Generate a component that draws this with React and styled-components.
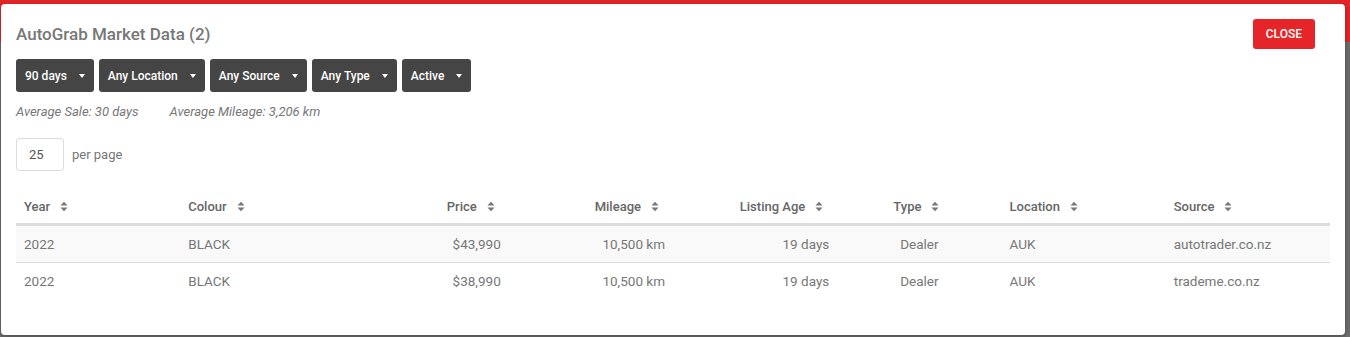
import React from 'react';
import styled, { createGlobalStyle } from 'styled-components';

const GlobalStyle = createGlobalStyle`
  html, body {
    margin: 0;
    padding: 0;
    font-family: Roboto, 'Liberation Sans', Arial, sans-serif;
  }
`;

const Backdrop = styled.div`
  width: 1350px;
  height: 337px;
  overflow: hidden;
  background: linear-gradient(#e52527 0 42px, #6e6e6e 42px);
  padding: 4px 0 0 1px;
  box-sizing: border-box;
`;

const Modal = styled.div`
  width: 1344px;
  height: 331px;
  box-sizing: border-box;
  background: #fff;
  border-radius: 4px;
  padding: 15px 15px 0 15px;
  box-shadow: 0 2px 6px rgba(0, 0, 0, 0.3);
`;

const Header = styled.div`
  display: flex;
  align-items: center;
  justify-content: space-between;
  padding-right: 15px;
  height: 30px;
`;

const Title = styled.h2`
  margin: 0;
  font-size: 17px;
  font-weight: 500;
  color: #777;
`;

const CloseButton = styled.button`
  height: 30px;
  padding: 0 13px;
  border: none;
  border-radius: 3px;
  background: #e52527;
  color: #fff;
  font-family: inherit;
  font-size: 12px;
  font-weight: 500;
`;

const Filters = styled.div`
  display: flex;
  gap: 5px;
  margin-top: 10px;
`;

const Dropdown = styled.button`
  display: flex;
  align-items: center;
  gap: 12px;
  height: 33px;
  padding: 0 9px;
  border: none;
  border-radius: 3px;
  background: #454545;
  color: #fff;
  font-family: inherit;
  font-size: 12px;
  font-weight: 500;
`;

const Caret = styled.span`
  width: 0;
  height: 0;
  border-left: 3.5px solid transparent;
  border-right: 3.5px solid transparent;
  border-top: 4px solid #fff;
`;

const Stats = styled.div`
  display: flex;
  gap: 31px;
  margin-top: 12px;
  font-size: 13px;
  font-style: italic;
  color: #777;
  line-height: 16px;
`;

const PerPage = styled.div`
  display: flex;
  align-items: center;
  gap: 8px;
  margin-top: 18px;
  font-size: 13px;
  color: #777;
`;

const PageInput = styled.div`
  width: 48px;
  height: 33px;
  box-sizing: border-box;
  border: 1px solid #ddd;
  border-radius: 3px;
  padding-left: 12px;
  display: flex;
  align-items: center;
  font-size: 13px;
  color: #555;
`;

const Table = styled.table`
  width: 1314px;
  margin-top: 19px;
  border-collapse: collapse;
  table-layout: fixed;
  font-size: 13.5px;
`;

const Th = styled.th`
  height: 33px;
  padding: 0 14px 0 8px;
  text-align: ${(p) => p.$align || 'left'};
  color: #666;
  font-size: 13px;
  font-weight: 500;
  border-bottom: 3px solid #ddd;
  white-space: nowrap;
`;

const Td = styled.td`
  height: 36px;
  padding: 0 8px;
  text-align: ${(p) => p.$align || 'left'};
  color: #777;
`;

const Row = styled.tr`
  background: ${(p) => (p.$striped ? '#f9f9f9' : '#fff')};
  border-bottom: ${(p) => (p.$last ? 'none' : '1px solid #ddd')};
`;

const SortIcon = styled.svg`
  width: 8px;
  height: 11px;
  margin-left: 10px;
  vertical-align: -1px;
`;

function Sort() {
  return (
    <SortIcon viewBox="0 0 8 11">
      <path d="M0.5 4.5 L4 0.8 L7.5 4.5 Z M0.5 6.5 L4 10.2 L7.5 6.5 Z" fill="#777" />
    </SortIcon>
  );
}

const columns = [
  { key: 'year', label: 'Year' },
  { key: 'colour', label: 'Colour' },
  { key: 'price', label: 'Price', align: 'right' },
  { key: 'mileage', label: 'Mileage', align: 'right' },
  { key: 'age', label: 'Listing Age', align: 'right' },
  { key: 'type', label: 'Type', align: 'center' },
  { key: 'location', label: 'Location' },
  { key: 'source', label: 'Source' },
];

const rows = [
  { year: '2022', colour: 'BLACK', price: '$43,990', mileage: '10,500 km', age: '19 days', type: 'Dealer', location: 'AUK', source: 'autotrader.co.nz' },
  { year: '2022', colour: 'BLACK', price: '$38,990', mileage: '10,500 km', age: '19 days', type: 'Dealer', location: 'AUK', source: 'trademe.co.nz' },
];

const filters = ['90 days', 'Any Location', 'Any Source', 'Any Type', 'Active'];

export default function App() {
  return (
    <>
      <GlobalStyle />
      <Backdrop>
        <Modal>
          <Header>
            <Title>AutoGrab Market Data (2)</Title>
            <CloseButton>CLOSE</CloseButton>
          </Header>
          <Filters>
            {filters.map((f) => (
              <Dropdown key={f}>
                {f}
                <Caret />
              </Dropdown>
            ))}
          </Filters>
          <Stats>
            <span>Average Sale: 30 days</span>
            <span>Average Mileage: 3,206 km</span>
          </Stats>
          <PerPage>
            <PageInput>25</PageInput>
            per page
          </PerPage>
          <Table>
            <thead>
              <tr>
                {columns.map((c) => (
                  <Th key={c.key} $align={c.align}>
                    {c.label}
                    <Sort />
                  </Th>
                ))}
              </tr>
            </thead>
            <tbody>
              {rows.map((r, i) => (
                <Row key={i} $striped={i % 2 === 0} $last={i === rows.length - 1}>
                  {columns.map((c) => (
                    <Td key={c.key} $align={c.align}>
                      {r[c.key]}
                    </Td>
                  ))}
                </Row>
              ))}
            </tbody>
          </Table>
        </Modal>
      </Backdrop>
    </>
  );
}
